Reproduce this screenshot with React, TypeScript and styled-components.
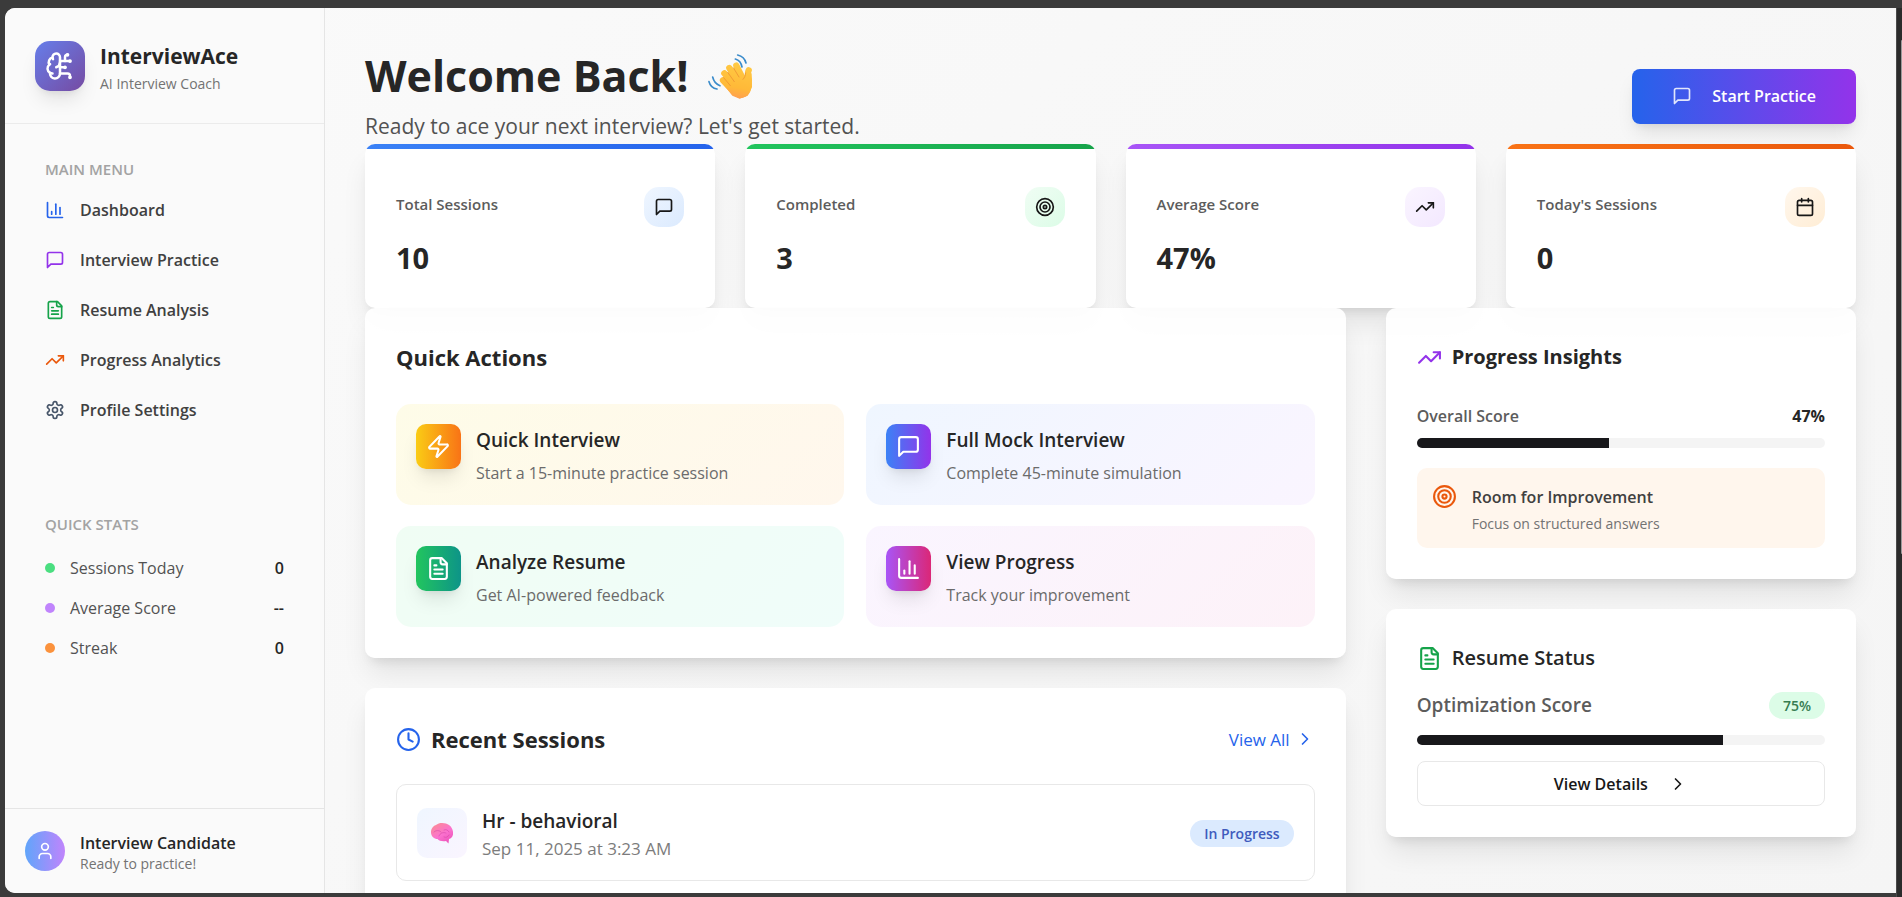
import React from 'react';
import styled, { createGlobalStyle } from 'styled-components';
import {
  BrainCircuit,
  Calendar,
  ChartColumn,
  ChevronRight,
  Clock,
  Target,
  TrendingUp,
  User,
  Zap,
} from 'lucide-react';

const GlobalStyle = createGlobalStyle`
  *, *::before, *::after { box-sizing: border-box; }
  html, body { margin: 0; height: 100%; }
  body {
    background: #3b3b3b;
    color: #262626;
    font-family: "Open Sans", "Noto Sans", sans-serif;
    font-size: 16px;
  }
  h1, h2, h3, p, ul { margin: 0; padding: 0; }
  ul { list-style: none; }
  button { font: inherit; color: inherit; cursor: pointer; border: 0; background: none; padding: 0; text-align: left; }
  a { color: inherit; text-decoration: none; }
  svg { flex: none; display: block; }
`;

/* ---------- icons ---------- */

interface IconProps {
  size?: number;
  color?: string;
}

const StrokeIcon = ({ size = 20, color = 'currentColor', children }: IconProps & { children: React.ReactNode }) => (
  <svg
    width={size}
    height={size}
    viewBox="0 0 24 24"
    fill="none"
    stroke={color}
    strokeWidth={2}
    strokeLinecap="round"
    strokeLinejoin="round"
    aria-hidden="true"
  >
    {children}
  </svg>
);

const MessageIcon = (props: IconProps) => (
  <StrokeIcon {...props}>
    <path d="M21 15a2 2 0 0 1-2 2H7l-4 4V5a2 2 0 0 1 2-2h14a2 2 0 0 1 2 2z" />
  </StrokeIcon>
);

const FileIcon = (props: IconProps) => (
  <StrokeIcon {...props}>
    <path d="M15 2H6a2 2 0 0 0-2 2v16a2 2 0 0 0 2 2h12a2 2 0 0 0 2-2V7Z" />
    <path d="M14 2v4a2 2 0 0 0 2 2h4" />
    <path d="M10 9H8" />
    <path d="M16 13H8" />
    <path d="M16 17H8" />
  </StrokeIcon>
);

const SettingsIcon = (props: IconProps) => (
  <StrokeIcon {...props}>
    <path d="M12.22 2h-.44a2 2 0 0 0-2 2v.18a2 2 0 0 1-1 1.73l-.43.25a2 2 0 0 1-2 0l-.15-.08a2 2 0 0 0-2.73.73l-.22.38a2 2 0 0 0 .73 2.73l.15.1a2 2 0 0 1 1 1.72v.51a2 2 0 0 1-1 1.74l-.15.09a2 2 0 0 0-.73 2.73l.22.38a2 2 0 0 0 2.73.73l.15-.08a2 2 0 0 1 2 0l.43.25a2 2 0 0 1 1 1.73V20a2 2 0 0 0 2 2h.44a2 2 0 0 0 2-2v-.18a2 2 0 0 1 1-1.73l.43-.25a2 2 0 0 1 2 0l.15.08a2 2 0 0 0 2.73-.73l.22-.39a2 2 0 0 0-.73-2.73l-.15-.08a2 2 0 0 1-1-1.74v-.5a2 2 0 0 1 1-1.74l.15-.09a2 2 0 0 0 .73-2.73l-.22-.38a2 2 0 0 0-2.73-.73l-.15.08a2 2 0 0 1-2 0l-.43-.25a2 2 0 0 1-1-1.73V4a2 2 0 0 0-2-2z" />
    <circle cx="12" cy="12" r="3" />
  </StrokeIcon>
);

const WavingHand = () => (
  <svg width="47" height="47" viewBox="50 26 141 141" fill="none" strokeLinecap="round" role="img" aria-label="Waving hand">
    <defs>
      <linearGradient id="hand" gradientUnits="userSpaceOnUse" x1="150" y1="50" x2="130" y2="163">
        <stop offset="0" stopColor="#ffcb45" />
        <stop offset="0.7" stopColor="#ffb938" />
        <stop offset="1" stopColor="#ff9d52" />
      </linearGradient>
    </defs>
    <g stroke="#3b8ccb" strokeWidth="5">
      <path d="M135 44c10 3 18 12 20 24" />
      <path d="M142 32c13 3 22 12 25 24" />
      <path d="M67 98c3 13 11 22 22 26" />
      <path d="M56 112c3 11 12 20 24 22" />
    </g>
    <path d="M112 86 138 66 160 98 176 78 184 88 185 128 172 154 148 163 126 154 96 116z" fill="url(#hand)" />
    <g stroke="url(#hand)" strokeWidth="19">
      <path d="M138 64l20 40" />
      <path d="M117 71l28 44" />
      <path d="M102 87l32 38" />
      <path d="M98 108l32 34" />
      <path d="M175 78c-4 8-3 16 0 28" />
      <path d="M148 152c20 0 28-14 27-44" />
    </g>
    <g stroke="#ee9433" strokeWidth="3" opacity="0.8">
      <path d="M129 70l17 28" />
      <path d="M112 84l20 28" />
      <path d="M100 100l20 24" />
      <path d="M166 86c-1 8-3 14-8 19" />
    </g>
  </svg>
);

const BrainEmoji = () => (
  <svg width="22" height="22" viewBox="0 0 22 22" fill="none" strokeLinecap="round" role="img" aria-label="Brain">
    <defs>
      <linearGradient id="brain" x1="4" y1="1" x2="16" y2="20" gradientUnits="userSpaceOnUse">
        <stop offset="0" stopColor="#fb8b96" />
        <stop offset="0.6" stopColor="#fb72cf" />
        <stop offset="1" stopColor="#ef58bd" />
      </linearGradient>
    </defs>
    <path
      d="M0 11C-.5 7 2 4 5 3c3-3 10-2.500 13 0 3 2 4.500 6 4 9.500-.5 2.500-2 4-4 4.500L17.500 21.500l-2.500-2.500c-3.500.5-7 0-8.500-2C3 17 .5 14.500 0 11z"
      fill="url(#brain)"
    />
    <g stroke="#dc4fae" strokeWidth="1" opacity="0.75">
      <path d="M3 10c2-2 5-2 7 0M8 14c1-3 4-4 7-3M13 8c2-1 4 0 5 2M13 15c2 1 4 0 5-2" />
    </g>
  </svg>
);

/* ---------- shell ---------- */

const Frame = styled.div`
  display: flex;
  height: 100vh;
  padding: 8px 0 4px 5px;
`;

const Window = styled.div`
  flex: 1;
  min-width: 0;
  display: flex;
  overflow: hidden;
  border-radius: 10px 0 0 10px;
  background: linear-gradient(135deg, #fafafa, #f5f5f5);
`;

const ScrollTrack = styled.div`
  width: 6px;
  margin: 0 0 -4px;
  padding: 32px 0 0 4px;
  background: #2b2b2b;
  border-left: 1px solid #4a4a4a;
`;

const ScrollThumb = styled.div`
  height: 60%;
  border-radius: 2px 0 0 2px;
  background: #9a9a9a;
`;

/* ---------- sidebar ---------- */

const Sidebar = styled.aside`
  flex: none;
  width: 320px;
  display: flex;
  flex-direction: column;
  background: #fafafa;
  border-right: 1px solid #e5e5e5;
`;

const Brand = styled.div`
  display: flex;
  align-items: flex-start;
  gap: 15px;
  padding: 33px 30px 26px;
  border-bottom: 1px solid #ebebeb;
`;

const BrandMark = styled.div`
  width: 50px;
  height: 50px;
  display: grid;
  place-items: center;
  border-radius: 15px;
  color: #fff;
  background: linear-gradient(135deg, #667eea, #764ba2);
  box-shadow: 0 12px 19px -4px rgba(0, 0, 0, 0.1), 0 5px 8px -5px rgba(0, 0, 0, 0.1);
`;

const BrandName = styled.p`
  font-size: 21px;
  line-height: 30px;
  font-weight: 700;
`;

const BrandTagline = styled.p`
  font-size: 14px;
  line-height: 26px;
  color: #737373;
`;

const SidebarBody = styled.div`
  flex: 1;
  min-height: 0;
  display: flex;
  flex-direction: column;
  gap: 79px;
  padding: 35px 40px;
`;

const GroupLabel = styled.h2`
  font-size: 15px;
  line-height: 20px;
  font-weight: 600;
  color: #a3a3a3;
  text-transform: uppercase;
`;

const NavList = styled.ul`
  padding-top: 6px;
`;

const NavLink = styled.a`
  height: 50px;
  display: flex;
  align-items: center;
  gap: 15px;
  font-weight: 600;
  color: #404040;
`;

const StatList = styled.ul`
  padding-top: 14px;
`;

const StatItem = styled.li`
  height: 40px;
  display: flex;
  align-items: center;
  gap: 15px;
  color: #525252;
`;

const Dot = styled.span<{ $color: string }>`
  width: 10px;
  height: 10px;
  border-radius: 50%;
  background: ${(p) => p.$color};
`;

const StatNumber = styled.span`
  margin-left: auto;
  font-weight: 600;
  color: #262626;
`;

const Profile = styled.div`
  display: flex;
  align-items: flex-start;
  gap: 15px;
  padding: 22px 20px 20px;
  border-top: 1px solid #e5e5e5;
`;

const Avatar = styled.div`
  width: 40px;
  height: 40px;
  display: grid;
  place-items: center;
  border-radius: 50%;
  color: #fff;
  background: linear-gradient(90deg, #60a5fa, #c084fc);
`;

const ProfileName = styled.p`
  line-height: 24px;
  font-weight: 600;
`;

const ProfileNote = styled.p`
  font-size: 14px;
  line-height: 18px;
  color: #737373;
`;

/* ---------- main ---------- */

const Main = styled.main`
  flex: 1;
  min-width: 0;
  padding: 40px;
  overflow: hidden;
`;

const PageHeader = styled.header`
  display: flex;
  align-items: center;
  justify-content: space-between;
`;

const PageTitle = styled.h1`
  display: flex;
  align-items: center;
  gap: 18px;
  font-size: 43px;
  line-height: 56px;
  font-weight: 700;
`;

const PageSubtitle = styled.p`
  padding-top: 5px;
  font-size: 21px;
  line-height: 35px;
  color: #525252;
`;

const StartButton = styled.button`
  height: 55px;
  display: flex;
  align-items: center;
  gap: 20px;
  padding: 0 40px;
  border-radius: 8px;
  font-weight: 600;
  color: #fff;
  background: linear-gradient(90deg, #2563eb, #9333ea);
  box-shadow: 0 12px 19px -4px rgba(0, 0, 0, 0.1), 0 5px 8px -5px rgba(0, 0, 0, 0.1);

  svg { opacity: 0.85; }
`;

const surface = `
  border-radius: 10px;
  background: rgba(255, 255, 255, 0.92);
  box-shadow: 0 18px 28px -4px rgba(0, 0, 0, 0.09), 0 8px 12px -6px rgba(0, 0, 0, 0.11);
`;

const StatGrid = styled.section`
  display: grid;
  grid-template-columns: repeat(4, 1fr);
  gap: 30px;
`;

const StatCard = styled.article`
  ${surface}
  background: #fff;
  overflow: hidden;
`;

const StatStripe = styled.div<{ $from: string; $to: string }>`
  height: 5px;
  background: linear-gradient(90deg, ${(p) => p.$from}, ${(p) => p.$to});
`;

const StatBody = styled.div`
  padding: 38px 31px 30px;
`;

const StatHead = styled.div`
  display: flex;
  justify-content: space-between;
`;

const StatLabel = styled.h3`
  font-size: 15px;
  line-height: 34px;
  font-weight: 600;
  color: #5c5c5c;
`;

const StatBadge = styled.span<{ $from: string; $to: string }>`
  width: 40px;
  height: 40px;
  display: grid;
  place-items: center;
  border-radius: 15px;
  color: #171717;
  background: linear-gradient(135deg, ${(p) => p.$from}, ${(p) => p.$to});
`;

const StatValue = styled.p`
  padding-top: 11px;
  font-size: 29px;
  line-height: 40px;
  font-weight: 700;
`;

const ContentGrid = styled.div`
  display: grid;
  grid-template-columns: repeat(3, 1fr);
  gap: 40px;
`;

const WideColumn = styled.div`
  grid-column: span 2;
  display: flex;
  flex-direction: column;
  gap: 30px;
`;

const SideColumn = styled.div`
  display: flex;
  flex-direction: column;
  gap: 30px;
`;

const Card = styled.section`
  ${surface}
  padding: 31px;
`;

const CardTitle = styled.h2<{ $small?: boolean; $weight?: number }>`
  display: flex;
  align-items: center;
  gap: 10px;
  font-size: ${(p) => (p.$small ? 20 : 22)}px;
  line-height: 36px;
  font-weight: ${(p) => p.$weight ?? 700};
`;

const ActionGrid = styled.div`
  display: grid;
  grid-template-columns: 1fr 1fr;
  gap: 21px 22px;
  padding-top: 29px;
`;

const ActionTile = styled.button<{ $from: string; $to: string }>`
  display: flex;
  align-items: flex-start;
  gap: 15px;
  padding: 20px;
  border-radius: 15px;
  background: linear-gradient(135deg, ${(p) => p.$from}, ${(p) => p.$to});
`;

const ActionIcon = styled.span<{ $from: string; $to: string }>`
  width: 45px;
  height: 45px;
  display: grid;
  place-items: center;
  border-radius: 10px;
  color: #fff;
  background: linear-gradient(90deg, ${(p) => p.$from}, ${(p) => p.$to});
  box-shadow: 0 12px 19px -4px rgba(0, 0, 0, 0.1), 0 5px 8px -5px rgba(0, 0, 0, 0.1);
`;

const ActionText = styled.span`
  display: flex;
  flex-direction: column;
  gap: 5px;
`;

const ActionTitle = styled.span`
  font-size: 19px;
  line-height: 32px;
  font-weight: 600;
`;

const ActionNote = styled.span`
  font-size: 16px;
  line-height: 24px;
  color: #6b6b6b;
`;

const CardHead = styled.div`
  height: 40px;
  display: flex;
  align-items: center;
  justify-content: space-between;
`;

const ViewAll = styled.a`
  display: flex;
  align-items: center;
  gap: 5px;
  font-size: 17px;
  color: #2563eb;
`;

const SessionRow = styled.article`
  display: flex;
  align-items: flex-start;
  gap: 15px;
  margin-top: 25px;
  padding: 23px 20px 17px;
  border: 1px solid #e8e8e8;
  border-radius: 10px;
  background: #fff;
`;

const SessionIcon = styled.div`
  width: 50px;
  height: 50px;
  display: grid;
  place-items: center;
  border-radius: 10px;
  background: linear-gradient(135deg, #eff6ff, #faf5ff);
`;

const SessionTitle = styled.h3`
  font-size: 19px;
  line-height: 27px;
  font-weight: 600;
`;

const SessionDate = styled.p`
  font-size: 17px;
  line-height: 28px;
  color: #7c7c7c;
`;

const Pill = styled.span<{ $bg: string; $fg: string }>`
  padding: 0 14px;
  border-radius: 14px;
  font-size: 14px;
  line-height: 27px;
  font-weight: 600;
  color: ${(p) => p.$fg};
  background: ${(p) => p.$bg};
`;

const SessionState = styled.div`
  display: flex;
  margin-left: auto;
  padding-top: 12px;
`;

const ScoreRow = styled.div`
  display: flex;
  align-items: center;
  justify-content: space-between;
  padding: 29px 0 9px;
  line-height: 25px;
  font-weight: 600;
  color: #5c5c5c;
`;

const ScoreValue = styled.span`
  font-weight: 700;
  color: #262626;
`;

const Track = styled.div`
  height: 10px;
  border-radius: 5px;
  overflow: hidden;
  background: #f4f4f4;
`;

const TrackFill = styled.div`
  height: 100%;
  background: #18181b;
`;

const Hint = styled.div`
  display: flex;
  align-items: flex-start;
  gap: 15px;
  margin-top: 20px;
  padding: 16px 15px 12px;
  border-radius: 10px;
  background: #fff6ed;
`;

const HintTitle = styled.h3`
  font-size: 16px;
  line-height: 26px;
  font-weight: 600;
  color: #404040;
`;

const HintNote = styled.p`
  padding-top: 2px;
  font-size: 14px;
  line-height: 24px;
  color: #737373;
`;

const OptimizationRow = styled.div`
  display: flex;
  align-items: center;
  justify-content: space-between;
  padding: 15px 0 16px;
  font-size: 19px;
  line-height: 28px;
  font-weight: 600;
  color: #5c5c5c;
`;

const DetailsButton = styled.button`
  width: 100%;
  height: 45px;
  display: flex;
  align-items: center;
  justify-content: center;
  gap: 20px;
  margin-top: 16px;
  border: 1px solid #e8e8e8;
  border-radius: 8px;
  font-weight: 600;
  color: #171717;
  background: #fff;
`;

/* ---------- data ---------- */

const navItems = [
  { label: 'Dashboard', icon: <ChartColumn size={20} color="#2563eb" /> },
  { label: 'Interview Practice', icon: <MessageIcon color="#9333ea" /> },
  { label: 'Resume Analysis', icon: <FileIcon color="#16a34a" /> },
  { label: 'Progress Analytics', icon: <TrendingUp size={20} color="#ea580c" /> },
  { label: 'Profile Settings', icon: <SettingsIcon color="#475569" /> },
];

const quickStats = [
  { label: 'Sessions Today', value: '0', color: '#4ade80' },
  { label: 'Average Score', value: '--', color: '#c084fc' },
  { label: 'Streak', value: '0', color: '#fb923c' },
];

const stats = [
  { label: 'Total Sessions', value: '10', icon: <MessageIcon />, stripe: ['#3b82f6', '#2563eb'], tint: ['#eff6ff', '#dbeafe'] },
  { label: 'Completed', value: '3', icon: <Target size={20} />, stripe: ['#22c55e', '#16a34a'], tint: ['#f0fdf4', '#dcfce7'] },
  { label: 'Average Score', value: '47%', icon: <TrendingUp size={20} />, stripe: ['#a855f7', '#9333ea'], tint: ['#faf5ff', '#f3e8ff'] },
  { label: "Today's Sessions", value: '0', icon: <Calendar size={20} />, stripe: ['#f97316', '#ea580c'], tint: ['#fff7ed', '#ffedd5'] },
];

const actions = [
  { title: 'Quick Interview', note: 'Start a 15-minute practice session', icon: <Zap size={25} />, fill: ['#facc15', '#f97316'], tint: ['#fefce8', '#fff7ed'] },
  { title: 'Full Mock Interview', note: 'Complete 45-minute simulation', icon: <MessageIcon size={25} />, fill: ['#3b82f6', '#9333ea'], tint: ['#eff6ff', '#faf5ff'] },
  { title: 'Analyze Resume', note: 'Get AI-powered feedback', icon: <FileIcon size={25} />, fill: ['#22c55e', '#0d9488'], tint: ['#f0fdf4', '#f0fdfa'] },
  { title: 'View Progress', note: 'Track your improvement', icon: <ChartColumn size={25} />, fill: ['#a855f7', '#db2777'], tint: ['#faf5ff', '#fdf2f8'] },
];

const Progress = ({ value, label }: { value: number; label: string }) => (
  <Track role="progressbar" aria-label={label} aria-valuenow={value} aria-valuemin={0} aria-valuemax={100}>
    <TrackFill style={{ width: `${value}%` }} />
  </Track>
);

/* ---------- page ---------- */

export default function App() {
  return (
    <>
      <GlobalStyle />
      <Frame>
        <Window>
          <Sidebar>
            <Brand>
              <BrandMark>
                <BrainCircuit size={30} />
              </BrandMark>
              <div>
                <BrandName>InterviewAce</BrandName>
                <BrandTagline>AI Interview Coach</BrandTagline>
              </div>
            </Brand>
            <SidebarBody>
              <nav aria-label="Main menu">
                <GroupLabel>Main Menu</GroupLabel>
                <NavList>
                  {navItems.map((item) => (
                    <li key={item.label}>
                      <NavLink href="#">
                        {item.icon}
                        {item.label}
                      </NavLink>
                    </li>
                  ))}
                </NavList>
              </nav>
              <section>
                <GroupLabel>Quick Stats</GroupLabel>
                <StatList>
                  {quickStats.map((s) => (
                    <StatItem key={s.label}>
                      <Dot $color={s.color} />
                      {s.label}
                      <StatNumber>{s.value}</StatNumber>
                    </StatItem>
                  ))}
                </StatList>
              </section>
            </SidebarBody>
            <Profile>
              <Avatar>
                <User size={20} />
              </Avatar>
              <div>
                <ProfileName>Interview Candidate</ProfileName>
                <ProfileNote>Ready to practice!</ProfileNote>
              </div>
            </Profile>
          </Sidebar>

          <Main>
            <PageHeader>
              <div>
                <PageTitle>
                  Welcome Back!
                  <WavingHand />
                </PageTitle>
                <PageSubtitle>Ready to ace your next interview? Let's get started.</PageSubtitle>
              </div>
              <StartButton type="button">
                <MessageIcon />
                Start Practice
              </StartButton>
            </PageHeader>

            <StatGrid>
              {stats.map((s) => (
                <StatCard key={s.label}>
                  <StatStripe $from={s.stripe[0]} $to={s.stripe[1]} />
                  <StatBody>
                    <StatHead>
                      <StatLabel>{s.label}</StatLabel>
                      <StatBadge $from={s.tint[0]} $to={s.tint[1]}>{s.icon}</StatBadge>
                    </StatHead>
                    <StatValue>{s.value}</StatValue>
                  </StatBody>
                </StatCard>
              ))}
            </StatGrid>

            <ContentGrid>
              <WideColumn>
                <Card>
                  <CardTitle>Quick Actions</CardTitle>
                  <ActionGrid>
                    {actions.map((a) => (
                      <ActionTile key={a.title} type="button" $from={a.tint[0]} $to={a.tint[1]}>
                        <ActionIcon $from={a.fill[0]} $to={a.fill[1]}>{a.icon}</ActionIcon>
                        <ActionText>
                          <ActionTitle>{a.title}</ActionTitle>
                          <ActionNote>{a.note}</ActionNote>
                        </ActionText>
                      </ActionTile>
                    ))}
                  </ActionGrid>
                </Card>

                <Card>
                  <CardHead>
                    <CardTitle>
                      <Clock size={25} color="#2563eb" />
                      Recent Sessions
                    </CardTitle>
                    <ViewAll href="#">
                      View All
                      <ChevronRight size={20} />
                    </ViewAll>
                  </CardHead>
                  <SessionRow>
                    <SessionIcon>
                      <BrainEmoji />
                    </SessionIcon>
                    <div>
                      <SessionTitle>Hr - behavioral</SessionTitle>
                      <SessionDate>Sep 11, 2025 at 3:23 AM</SessionDate>
                    </div>
                    <SessionState>
                      <Pill $bg="#dbeafe" $fg="#3f5bbd">In Progress</Pill>
                    </SessionState>
                  </SessionRow>
                </Card>
              </WideColumn>

              <SideColumn>
                <Card>
                  <CardTitle $small>
                    <TrendingUp size={25} color="#9333ea" />
                    Progress Insights
                  </CardTitle>
                  <ScoreRow>
                    Overall Score
                    <ScoreValue>47%</ScoreValue>
                  </ScoreRow>
                  <Progress value={47} label="Overall Score" />
                  <Hint>
                    <Target size={25} color="#ea580c" />
                    <div>
                      <HintTitle>Room for Improvement</HintTitle>
                      <HintNote>Focus on structured answers</HintNote>
                    </div>
                  </Hint>
                </Card>

                <Card>
                  <CardTitle $small $weight={600}>
                    <FileIcon size={25} color="#16a34a" />
                    Resume Status
                  </CardTitle>
                  <OptimizationRow>
                    Optimization Score
                    <Pill $bg="#dcfce7" $fg="#377d51">75%</Pill>
                  </OptimizationRow>
                  <Progress value={75} label="Optimization Score" />
                  <DetailsButton type="button">
                    View Details
                    <ChevronRight size={20} />
                  </DetailsButton>
                </Card>
              </SideColumn>
            </ContentGrid>
          </Main>
        </Window>
        <ScrollTrack aria-hidden="true">
          <ScrollThumb />
        </ScrollTrack>
      </Frame>
    </>
  );
}
